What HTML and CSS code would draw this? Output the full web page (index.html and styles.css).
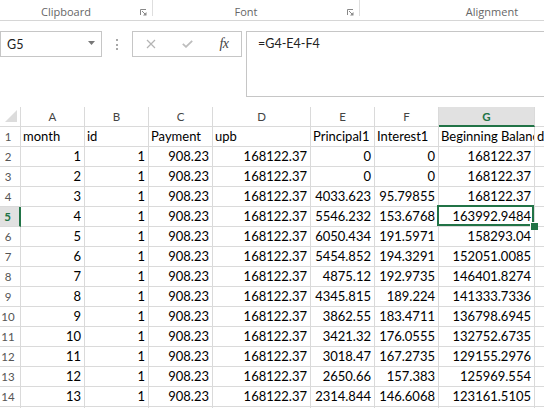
FILE: index.html
```html
<!DOCTYPE html>
<html lang="en">
<head>
    <meta charset="UTF-8">
    <meta name="viewport" content="width=device-width, initial-scale=1.0">
    <title>Book1 - Excel</title>
    <link rel="stylesheet" href="styles.css">
</head>
<body>
    <!-- ribbon group labels -->
    <div class="ribbon">
        <div class="group clip">
            <span class="label">Clipboard</span>
            <span class="launcher"><svg width="7" height="7" viewBox="0 0 7 7"><path d="M0.5 6V0.5H6" fill="none" stroke="#888"/><path d="M2 2L5.5 5.5" stroke="#888"/><path d="M3 6.5H6.5V3Z" fill="#888"/></svg></span>
        </div>
        <div class="group font">
            <span class="label">Font</span>
            <span class="launcher"><svg width="7" height="7" viewBox="0 0 7 7"><path d="M0.5 6V0.5H6" fill="none" stroke="#888"/><path d="M2 2L5.5 5.5" stroke="#888"/><path d="M3 6.5H6.5V3Z" fill="#888"/></svg></span>
        </div>
        <div class="group align">
            <span class="label">Alignment</span>
        </div>
    </div>

    <!-- formula bar -->
    <div class="fbar">
        <div class="namebox">
            <span>G5</span>
            <svg class="drop" width="7" height="4" viewBox="0 0 7 4"><path d="M0 0H7L3.5 4Z" fill="#777"/></svg>
        </div>
        <div class="dots"><i></i><i></i><i></i></div>
        <div class="btns">
            <span><svg width="10" height="10" viewBox="0 0 10 10"><path d="M1 1L9 9M9 1L1 9" stroke="#b4b4b4" stroke-width="1.2"/></svg></span>
            <span><svg width="11" height="8" viewBox="0 0 11 8"><path d="M0.8 3.8L4 6.8L10.2 0.8" fill="none" stroke="#bdbdbd" stroke-width="1.8"/></svg></span>
            <span class="fx">fx</span>
        </div>
        <div class="formula">=G4-E4-F4</div>
    </div>

    <!-- worksheet -->
    <div class="sheet">
        <div class="corner"><svg width="12" height="12" viewBox="0 0 12 12"><path d="M12 0V12H0Z" fill="#dcdcdc"/></svg></div>
        <div class="ch">A</div><div class="ch">B</div><div class="ch">C</div><div class="ch">D</div><div class="ch">E</div><div class="ch">F</div><div class="ch sel">G</div><div class="ch">H</div>

        <div class="rh">1</div><div class="c t">month</div><div class="c t">id</div><div class="c t">Payment</div><div class="c t">upb</div><div class="c t">Principal1</div><div class="c t">Interest1</div><div class="c t">Beginning Balance</div><div class="c t">dif</div>
        <div class="rh">2</div><div class="c">1</div><div class="c">1</div><div class="c">908.23</div><div class="c">168122.37</div><div class="c">0</div><div class="c">0</div><div class="c">168122.37</div><div class="c"></div>
        <div class="rh">3</div><div class="c">2</div><div class="c">1</div><div class="c">908.23</div><div class="c">168122.37</div><div class="c">0</div><div class="c">0</div><div class="c">168122.37</div><div class="c"></div>
        <div class="rh">4</div><div class="c">3</div><div class="c">1</div><div class="c">908.23</div><div class="c">168122.37</div><div class="c">4033.623</div><div class="c">95.79855</div><div class="c">168122.37</div><div class="c"></div>
        <div class="rh sel">5</div><div class="c">4</div><div class="c">1</div><div class="c">908.23</div><div class="c">168122.37</div><div class="c">5546.232</div><div class="c">153.6768</div><div class="c active">163992.9484</div><div class="c"></div>
        <div class="rh">6</div><div class="c">5</div><div class="c">1</div><div class="c">908.23</div><div class="c">168122.37</div><div class="c">6050.434</div><div class="c">191.5971</div><div class="c">158293.04</div><div class="c"></div>
        <div class="rh">7</div><div class="c">6</div><div class="c">1</div><div class="c">908.23</div><div class="c">168122.37</div><div class="c">5454.852</div><div class="c">194.3291</div><div class="c">152051.0085</div><div class="c"></div>
        <div class="rh">8</div><div class="c">7</div><div class="c">1</div><div class="c">908.23</div><div class="c">168122.37</div><div class="c">4875.12</div><div class="c">192.9735</div><div class="c">146401.8274</div><div class="c"></div>
        <div class="rh">9</div><div class="c">8</div><div class="c">1</div><div class="c">908.23</div><div class="c">168122.37</div><div class="c">4345.815</div><div class="c">189.224</div><div class="c">141333.7336</div><div class="c"></div>
        <div class="rh">10</div><div class="c">9</div><div class="c">1</div><div class="c">908.23</div><div class="c">168122.37</div><div class="c">3862.55</div><div class="c">183.4711</div><div class="c">136798.6945</div><div class="c"></div>
        <div class="rh">11</div><div class="c">10</div><div class="c">1</div><div class="c">908.23</div><div class="c">168122.37</div><div class="c">3421.32</div><div class="c">176.0555</div><div class="c">132752.6735</div><div class="c"></div>
        <div class="rh">12</div><div class="c">11</div><div class="c">1</div><div class="c">908.23</div><div class="c">168122.37</div><div class="c">3018.47</div><div class="c">167.2735</div><div class="c">129155.2976</div><div class="c"></div>
        <div class="rh">13</div><div class="c">12</div><div class="c">1</div><div class="c">908.23</div><div class="c">168122.37</div><div class="c">2650.66</div><div class="c">157.383</div><div class="c">125969.554</div><div class="c"></div>
        <div class="rh">14</div><div class="c">13</div><div class="c">1</div><div class="c">908.23</div><div class="c">168122.37</div><div class="c">2314.844</div><div class="c">146.6068</div><div class="c">123161.5105</div><div class="c"></div>
        <div class="rh">15</div><div class="c">14</div><div class="c">1</div><div class="c">908.23</div><div class="c">168122.37</div><div class="c">1996.12</div><div class="c">135.9417</div><div class="c">120700.0597</div><div class="c"></div>
    </div>
</body>
</html>
```

FILE: styles.css
```css
* {
    box-sizing: border-box;
}

body {
    margin: 0;
    width: 544px;
    height: 408px;
    overflow: hidden;
    background: #fff;
    font-family: Lato, "Liberation Sans", sans-serif;
    color: #000;
}

/* ribbon labels */
.ribbon {
    display: flex;
    height: 21px;
    border-bottom: 1px solid #d6d6d6;
    font-family: "Open Sans", "Noto Sans", sans-serif;
    font-size: 11px;
    color: #666;
}
.group {
    display: flex;
    align-items: flex-start;
    height: 16px;
    flex-shrink: 0;
    border-right: 1px solid #dedede;
    > .label {
        flex: 1;
        text-align: center;
        padding-top: 3px;
        line-height: 17px;
        white-space: nowrap;
    }
    > .launcher {
        width: 20px;
        padding: 9px 0 0 8px;
        line-height: 0;
    }
}
.group.clip { width: 153px; }
.group.font { width: 207px; }
.group.align { width: 264px; border-right: 0; }

/* formula bar */
.fbar {
    display: flex;
    align-items: flex-start;
    margin-top: 10px;
    font-size: 12.5px;
    color: #222;
}
.namebox {
    display: flex;
    align-items: center;
    justify-content: space-between;
    width: 102px;
    height: 26px;
    border: 1px solid #c6c6c6;
    padding: 1px 6px 0 6px;
    > .drop { margin-top: -3px; }
}
.dots {
    width: 30px;
    display: flex;
    flex-direction: column;
    align-items: center;
    gap: 2.5px;
    padding-top: 8px;
    > i {
        width: 2px;
        height: 2px;
        background: #a8a8a8;
    }
}
.btns {
    display: flex;
    width: 110px;
    height: 26px;
    border: 1px solid #c6c6c6;
    > span {
        width: 36px;
        display: flex;
        align-items: center;
        justify-content: center;
    }
    > .fx {
        font-family: "Liberation Serif", serif;
        font-style: italic;
        font-size: 14px;
        color: #444;
        letter-spacing: -0.5px;
        padding-left: 2px;
    }
}
.formula {
    flex: 1;
    height: 66px;
    margin: 0 -2px 0 4px;
    border: 1px solid #c6c6c6;
    padding: 4px 0 0 11px;
    line-height: 16px;
}

/* worksheet grid */
.sheet {
    display: grid;
    grid-template-columns: 21px 64px 64px 64px 98px 64px 64px 96px 64px;
    grid-auto-rows: 20px;
    margin-top: 10px;
}
.sheet > div {
    border-right: 1px solid #dadada;
    border-bottom: 1px solid #dadada;
    white-space: nowrap;
    overflow: hidden;
    line-height: 19px;
}
.corner {
    display: flex;
    align-items: flex-end;
    justify-content: flex-end;
    padding: 0 3px 4px 0;
}
.ch {
    text-align: center;
    font-size: 11.5px;
    color: #444;
}
.rh {
    text-align: center;
    padding-right: 4px;
    font-size: 11.5px;
    color: #555;
}
.ch.sel, .rh.sel {
    background: #e1e1e1;
    color: #217346;
    font-weight: bold;
}
.sheet > .ch.sel { border-bottom: 2px solid #217346; }
.sheet > .rh.sel { border-right: 2px solid #217346; }

.c {
    font-size: 13px;
    text-align: right;
    padding: 0 3px 0 2px;
}
.c.t { text-align: left; }

/* selected cell outline and fill handle */
.sheet > .active {
    position: relative;
    overflow: visible;
}
.active::after {
    content: "";
    position: absolute;
    top: -2px;
    left: -2px;
    right: 0;
    bottom: 0;
    border: 2px solid #217346;
}
.active::before {
    content: "";
    position: absolute;
    right: -4px;
    bottom: -4px;
    width: 7px;
    height: 7px;
    background: #217346;
    border-left: 1px solid #fff;
    border-top: 1px solid #fff;
    z-index: 2;
}
```
